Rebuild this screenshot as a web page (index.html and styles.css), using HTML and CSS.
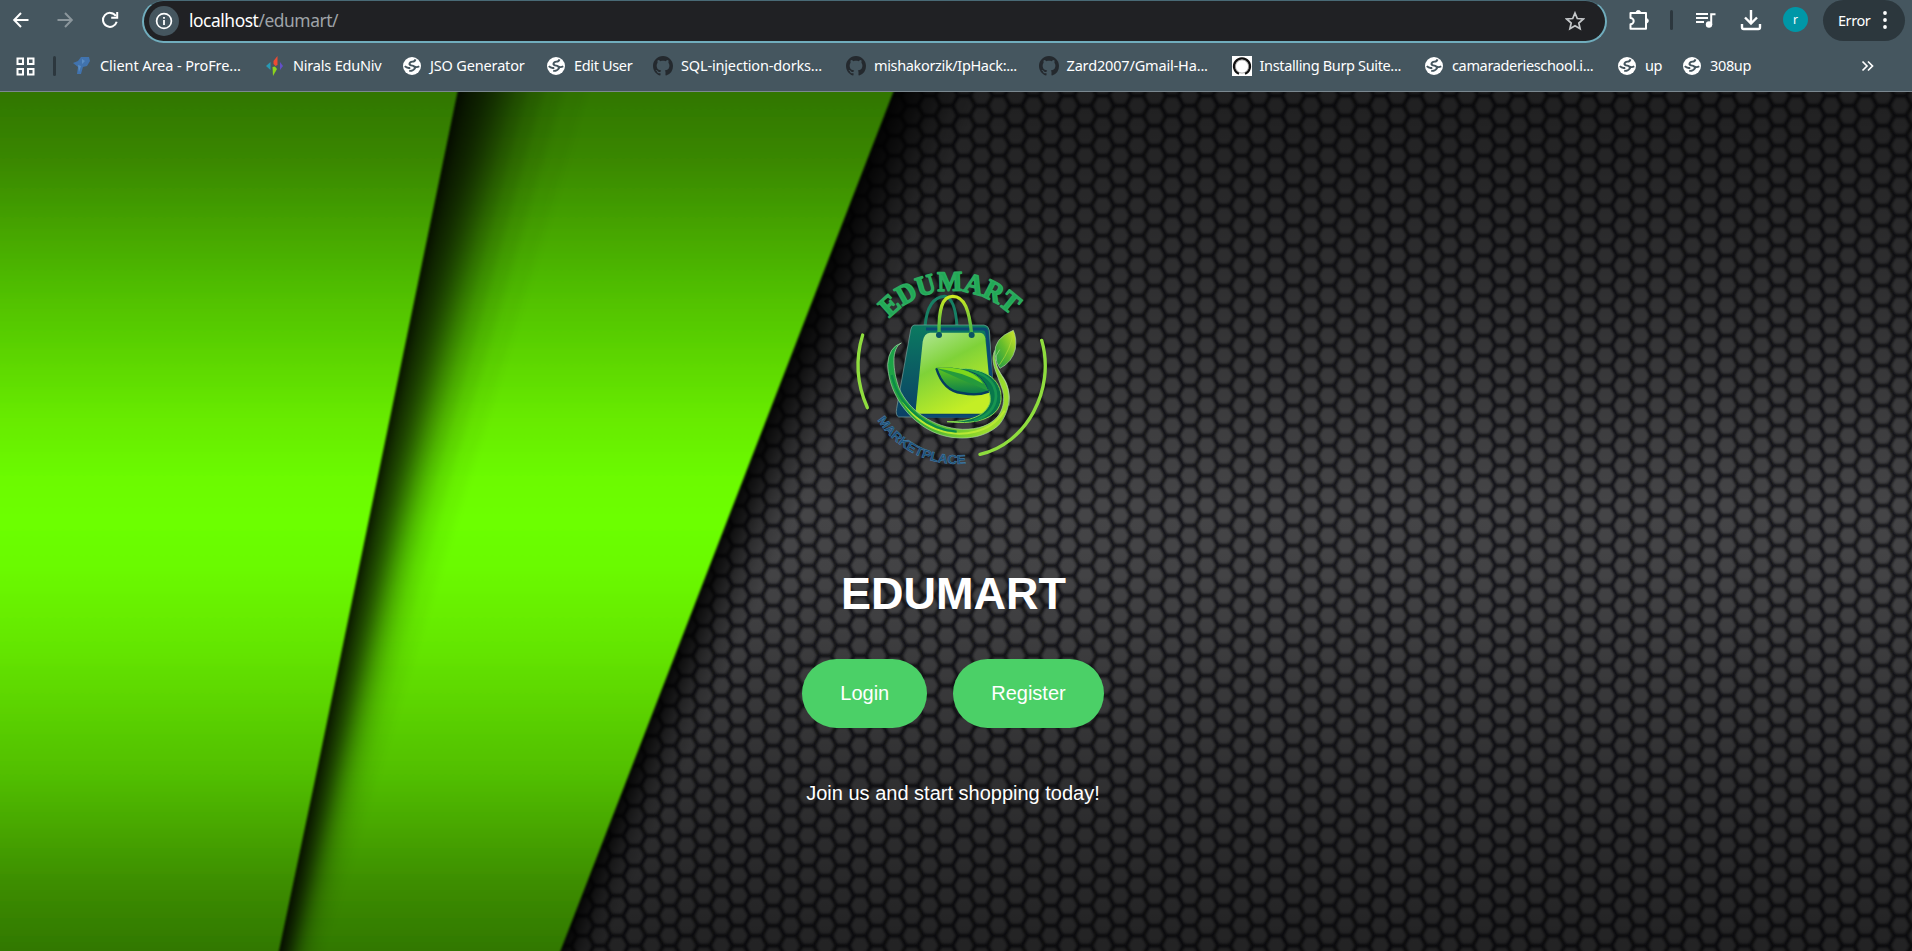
FILE: index.html
```html
<!DOCTYPE html>
<html lang="en">
<head>
<meta charset="utf-8">
<title>EduMart</title>
<link rel="stylesheet" href="styles.css">
</head>
<body>
<svg class="defs" width="0" height="0" aria-hidden="true">
  <symbol id="globe" viewBox="0 0 20 20">
    <circle cx="10" cy="10" r="9" fill="#fff"/>
    <path d="M13.500 3.400Q12.800 5.600 10.500 5.600Q7.600 5.800 7.400 8.200Q8 9.800 10.500 9.600Q13 10.200 13 12.200Q11 15.200 7.200 14.800M2.800 10.200Q5 12.600 8.300 11.800M12.500 10.600Q15 11.800 17.200 10.200" fill="none" stroke="#45565f" stroke-width="1.900"/>
  </symbol>
  <symbol id="github" viewBox="0 0 16 16">
    <path fill="#24292e" d="M8 0C3.580 0 0 3.580 0 8c0 3.540 2.290 6.530 5.470 7.590.4.070.55-.17.55-.38 0-.19-.01-.82-.01-1.490-2.010.37-2.530-.49-2.690-.94-.09-.23-.48-.94-.82-1.130-.28-.15-.68-.52-.01-.53.63-.01 1.080.58 1.230.82.72 1.210 1.870.87 2.330.66.07-.52.28-.87.51-1.070-1.780-.2-3.640-.89-3.640-3.950 0-.87.31-1.590.82-2.150-.08-.2-.36-1.020.08-2.120 0 0 .67-.21 2.200.82.64-.18 1.320-.27 2-.27s1.360.09 2 .27c1.530-1.040 2.200-.82 2.200-.82.44 1.100.16 1.920.08 2.120.51.56.82 1.270.82 2.150 0 3.070-1.870 3.750-3.650 3.950.29.25.54.73.54 1.480 0 1.070-.01 1.930-.01 2.200 0 .21.15.46.55.38A8.010 8.010 0 0 0 16 8c0-4.420-3.580-8-8-8z"/>
  </symbol>
</svg>

<header class="chrome">
  <div class="toolbar">
    <div class="nav back"><svg width="18" height="18" viewBox="0 0 18 18"><path d="M16.500 9H3M9 2L2.200 9L9 16" fill="none" stroke="#fff" stroke-width="2"/></svg></div>
    <div class="nav forward"><svg width="18" height="18" viewBox="0 0 18 18"><path d="M1.500 9H15M9 2L15.800 9L9 16" fill="none" stroke="#8b969c" stroke-width="2"/></svg></div>
    <div class="nav reload"><svg width="18" height="18" viewBox="0 0 18 18"><path d="M14.800 5A7 7 0 1 0 15.700 10.800" fill="none" stroke="#fff" stroke-width="2"/><path d="M16.200 1V6.800H10.200" fill="none" stroke="#fff" stroke-width="2"/></svg></div>
    <div class="address">
      <span class="info"><svg width="18" height="18" viewBox="0 0 18 18"><circle cx="9" cy="9" r="7.400" fill="none" stroke="#fff" stroke-width="1.700"/><path d="M9 8V13M9 5V6.800" stroke="#fff" stroke-width="1.800"/></svg></span>
      <span class="url">localhost<span class="path">/edumart/</span></span>
      <svg class="star" width="20" height="20" viewBox="0 0 20 20"><path d="M10 2L12.300 7.500L18.300 8L13.800 12L15.100 17.800L10 14.700L4.900 17.800L6.200 12L1.700 8L7.700 7.500Z" fill="none" stroke="#c5c8ca" stroke-width="1.700"/></svg>
    </div>
    <div class="nav puzzle"><svg width="22" height="22" viewBox="0 0 22 22"><path d="M2.500 4H18V19.800H2.500V15.300A3.200 3.200 0 0 0 2.500 8.900Z" fill="none" stroke="#fff" stroke-width="2" stroke-linejoin="round"/><path d="M8 3.800a2.300 2.300 0 0 1 4.600 0ZM18 9.500a2.300 2.300 0 0 1 0 4.600Z" fill="#fff" stroke="#fff"/></svg></div>
    <span class="divider"></span>
    <div class="nav music"><svg width="22" height="20" viewBox="0 0 22 20"><path d="M1 4H13M1 8H13M1 12H9M16.200 15V4.200H20.500" fill="none" stroke="#fff" stroke-width="2"/><circle cx="14" cy="14.500" r="3.200" fill="#fff"/></svg></div>
    <div class="nav download"><svg width="22" height="22" viewBox="0 0 22 22"><path d="M11 1V14M5 8.500L11 14.500L17 8.500M2 15V18.300Q2 20 3.700 20H18.300Q20 20 20 18.300V15" fill="none" stroke="#fff" stroke-width="2.400"/></svg></div>
    <span class="avatar">r</span>
    <div class="error-pill"><span>Error</span><svg width="6" height="18" viewBox="0 0 6 18"><g fill="#fff"><circle cx="3" cy="2" r="1.900"/><circle cx="3" cy="9" r="1.900"/><circle cx="3" cy="16" r="1.900"/></g></svg></div>
  </div>
  <nav class="bookmarks">
    <svg class="apps" width="19" height="19" viewBox="0 0 19 19"><g fill="none" stroke="#fff" stroke-width="2"><rect x="1.500" y="1.500" width="5.500" height="5.500"/><rect x="12" y="1.500" width="5.500" height="5.500"/><rect x="1.500" y="12" width="5.500" height="5.500"/><rect x="12" y="12" width="5.500" height="5.500"/></g></svg>
    <span class="divider"></span>
    <div class="bm w-client"><svg class="ico" viewBox="0 0 20 20"><path d="M1 7L6 5L9 1L17 1L18 5L15 10L11 11L9 18L5 18L6 11Z" fill="#4173ae"/><path d="M10 3L13 5L10 8ZM6 9L9 10L7 16Z" fill="#5b8dc4"/></svg><span>Client Area - ProFre...</span></div>
    <div class="bm w-nirals"><svg class="ico" viewBox="0 0 20 20"><path d="M8.500 5L12.500 0V9L10.500 10L8.500 8Z" fill="#ee4b32"/><path d="M7.500 11L10 10.500L12 13L8 20Z" fill="#8bd31d"/><path d="M5.500 6V14L1 10Z" fill="#2899b5"/><path d="M15 6V14L18 10Z" fill="#6350c9"/></svg><span>Nirals EduNiv</span></div>
    <div class="bm w-jso"><svg class="ico"><use href="#globe"/></svg><span>JSO Generator</span></div>
    <div class="bm w-edit"><svg class="ico"><use href="#globe"/></svg><span>Edit User</span></div>
    <div class="bm w-sql"><svg class="ico"><use href="#github"/></svg><span>SQL-injection-dorks...</span></div>
    <div class="bm w-misha"><svg class="ico"><use href="#github"/></svg><span>mishakorzik/IpHack:...</span></div>
    <div class="bm w-zard"><svg class="ico"><use href="#github"/></svg><span>Zard2007/Gmail-Ha...</span></div>
    <div class="bm w-burp"><svg class="ico" viewBox="0 0 20 20"><rect width="20" height="20" fill="#fff"/><path d="M7 17.800A8 8 0 1 1 13 17.800" fill="none" stroke="#111" stroke-width="2.200"/><circle cx="10" cy="10.500" r="6.600" fill="none" stroke="#777" stroke-width=".6"/></svg><span>Installing Burp Suite...</span></div>
    <div class="bm w-camara"><svg class="ico"><use href="#globe"/></svg><span>camaraderieschool.i...</span></div>
    <div class="bm w-up"><svg class="ico"><use href="#globe"/></svg><span>up</span></div>
    <div class="bm w-308"><svg class="ico"><use href="#globe"/></svg><span>308up</span></div>
    <svg class="more" width="13" height="12" viewBox="0 0 13 12"><path d="M1.500 1.500L6 6L1.500 10.500M7 1.500L11.500 6L7 10.500" fill="none" stroke="#fff" stroke-width="1.700"/></svg>
  </nav>
</header>

<main class="page">
  <svg class="backdrop" viewBox="0 92 1912 859" preserveAspectRatio="none" aria-hidden="true">
    <defs>
      <pattern id="hex" patternUnits="userSpaceOnUse" x="1206.700" y="425.700" width="34.680" height="20">
        <rect width="34.680" height="20" fill="#18181a"/>
        <g fill="#454547" stroke="#454547" stroke-width="3" stroke-linejoin="round">
          <path id="cell" d="M-7.200 0L-3.800 -6.300H3.800L7.200 0L3.800 6.300H-3.800Z"/>
          <use href="#cell" x="34.680"/><use href="#cell" y="20"/><use href="#cell" x="34.680" y="20"/>
          <use href="#cell" x="17.340" y="10"/>
        </g>
      </pattern>
      <linearGradient id="shade" x1="0" y1="0" x2="0" y2="1">
        <stop offset="0" stop-color="#000" stop-opacity=".54"/><stop offset=".22" stop-color="#000" stop-opacity=".32"/>
        <stop offset=".48" stop-color="#000" stop-opacity="0"/><stop offset=".56" stop-color="#000" stop-opacity=".03"/>
        <stop offset=".8" stop-color="#000" stop-opacity=".3"/><stop offset="1" stop-color="#000" stop-opacity=".5"/>
      </linearGradient>
      <linearGradient id="green" gradientUnits="userSpaceOnUse" x1="0" y1="92" x2="0" y2="951">
        <stop offset="0" stop-color="#307600"/><stop offset=".08" stop-color="#3a8800"/><stop offset=".23" stop-color="#50be00"/>
        <stop offset=".37" stop-color="#66e800"/><stop offset=".45" stop-color="#6cfb00"/><stop offset=".5" stop-color="#6cff00"/>
        <stop offset=".55" stop-color="#6bfb00"/><stop offset=".65" stop-color="#64e500"/><stop offset=".8" stop-color="#51bd00"/>
        <stop offset=".92" stop-color="#3d8e00"/><stop offset="1" stop-color="#317800"/>
      </linearGradient>
      <filter id="soft"><feGaussianBlur stdDeviation="1"/></filter>
      <filter id="edge"><feGaussianBlur stdDeviation=".9"/></filter>
      <filter id="fade" x="-20%" width="140%"><feGaussianBlur stdDeviation="4 1"/></filter>
      <clipPath id="second"><path d="M0 80H898L555 965H0Z"/></clipPath>
    </defs>
    <rect x="400" y="80" width="1530" height="890" fill="url(#hex)" filter="url(#soft)"/>
    <rect x="400" y="92" width="1512" height="859" fill="url(#shade)"/>
    <g filter="url(#fade)">
      <path d="M800 60H913L554 970H500Z" fill-opacity=".65"/>
      <path d="M800 60H925L558 970H500Z" fill-opacity=".4"/>
      <path d="M800 60H938L563 970H500Z" fill-opacity=".35"/>
      <path d="M800 60H953L569 970H500Z" fill-opacity=".26"/>
      <path d="M800 60H970L577 970H500Z" fill-opacity=".18"/>
      <path d="M800 60H990L588 970H500Z" fill-opacity=".12"/>
    </g>
    <path d="M-5 80H898L555 965H-5Z" fill="url(#green)" filter="url(#edge)"/>
    <g clip-path="url(#second)">
      <g filter="url(#fade)">
        <path d="M400 60H469L277 970H240Z" fill-opacity=".6"/>
        <path d="M400 60H478L279 970H240Z" fill-opacity=".27"/>
        <path d="M400 60H488L282 970H240Z" fill-opacity=".25"/>
        <path d="M400 60H498L285 970H240Z" fill-opacity=".24"/>
        <path d="M400 60H509L288 970H240Z" fill-opacity=".22"/>
        <path d="M400 60H521L291 970H240Z" fill-opacity=".2"/>
        <path d="M400 60H535L295 970H240Z" fill-opacity=".17"/>
        <path d="M400 60H552L300 970H240Z" fill-opacity=".12"/>
        <path d="M400 60H572L307 970H240Z" fill-opacity=".08"/>
        <path d="M400 60H597L316 970H240Z" fill-opacity=".04"/>
      </g>
    </g>
    <path d="M-5 80H460L315 780L276 965H-5Z" fill="url(#green)" filter="url(#edge)"/>
  </svg>

  <svg class="logo" width="220" height="220" viewBox="0 0 660 660" role="img" aria-label="EduMart Marketplace">
    <defs>
      <linearGradient id="front" x1="0" y1="0" x2=".5" y2="1"><stop offset="0" stop-color="#b4e89a"/><stop offset=".45" stop-color="#7fd238"/><stop offset="1" stop-color="#c4ee25"/></linearGradient>
      <linearGradient id="side" x1="0" y1="0" x2="0" y2="1"><stop offset="0" stop-color="#0b7a60"/><stop offset="1" stop-color="#0b3f66"/></linearGradient>
      <linearGradient id="swoosh" x1="0" y1="0" x2="1" y2=".3"><stop offset="0" stop-color="#17a14b"/><stop offset=".45" stop-color="#35ab35"/><stop offset="1" stop-color="#9bdc2c"/></linearGradient>
      <linearGradient id="leaf" x1="0" y1="0" x2="0" y2="1"><stop offset="0" stop-color="#5fc61e"/><stop offset="1" stop-color="#087a4c"/></linearGradient>
      <linearGradient id="leaf2" x1="1" y1="0" x2="0" y2="1"><stop offset="0" stop-color="#d6e92a"/><stop offset=".5" stop-color="#67bd2c"/><stop offset="1" stop-color="#15964a"/></linearGradient>
      <linearGradient id="handle" x1="0" y1="0" x2="0" y2="1"><stop offset="0" stop-color="#cdea20"/><stop offset="1" stop-color="#3fb34c"/></linearGradient>
      <path id="top-arc" d="M148 190A252 252 0 0 1 516 184"/>
      <path id="low-arc" d="M112 495A282 282 0 0 0 392 624"/>
    </defs>
    <g fill="none" stroke="#8fdd3e" stroke-width="10" stroke-linecap="round">
      <path d="M68 240Q34 350 82 458"/><path d="M605 256C648 404 558 568 420 598"/>
    </g>
    <g class="logo-top">
      <text class="halo"><textPath href="#top-arc" textLength="408" lengthAdjust="spacingAndGlyphs">EDUMART</textPath></text>
    </g>
    <text class="logo-low"><textPath href="#low-arc" textLength="312" lengthAdjust="spacingAndGlyphs">MARKETPLACE</textPath></text>
    <path d="M255 215C260 155 280 126 314 124Q346 130 351 215" fill="none" stroke="#178064" stroke-width="9"/>
    <path d="M222 210H432Q446 212 448 226L464 470L448 486H176Q166 482 170 460L212 225Q214 212 222 210Z" fill="url(#side)" stroke="#7ba39e" stroke-width="2"/>
    <path d="M258 222H430Q440 222 441 234L460 440L440 484H250" fill="none" stroke="#0b4a73" stroke-width="9"/>
    <path d="M270 233H420Q434 235 436 250L454 440Q452 464 428 476H226L248 260Q252 235 270 233Z" fill="url(#front)"/>
    <path d="M297 238C296 160 307 124 338 124C374 124 388 166 395 238" fill="none" stroke="url(#handle)" stroke-width="10"/>
    <g fill="#0a5263"><circle cx="297" cy="240" r="9"/><circle cx="395" cy="240" r="9"/></g>
    <path d="M184 264C153 280 158 345 177 399C206 466 278 518 367 523C466 524 502 468 488 406C470 352 445 310 468 282C459 304 466 334 489 366C515 404 514 462 480 506C432 558 334 562 266 524C190 482 144 400 143 328Q146 276 184 264Z" fill="url(#swoosh)" stroke="#a8d5a7" stroke-width="2"/>
    <path d="M190 440C240 520 330 550 405 530Q458 520 494 467" fill="none" stroke="#b9e834" stroke-width="6"/>
    <path d="M155 360C178 462 270 524 350 530" fill="none" stroke="#0d8a48" stroke-width="7"/>
    <path d="M350 342C426 334 488 370 483 434C478 482 424 512 321 500C386 500 438 484 450 442C456 401 426 366 350 342Z" fill="#08784b" stroke="#87d64b" stroke-width="3"/>
    <path d="M376 345C438 350 468 386 468 424Q465 476 402 497" fill="none" stroke="#189650" stroke-width="8"/>
    <path d="M289 340Q311 405 365 414Q414 424 446 408Q430 360 385 348Q340 336 289 340Z" fill="url(#leaf)" stroke="#073f62" stroke-width="3"/>
    <path d="M289 340Q310 408 365 414Q412 424 446 410" fill="none" stroke="#063c5e" stroke-width="7"/>
    <path d="M289 340Q365 376 446 408C425 360 380 330 289 340Z" fill="#259a3c"/>
    <path d="M289 340Q365 350 430 386Q390 330 289 340Z" fill="#7ed81c"/>
    <path d="M520 226Q460 250 465 298Q470 328 480 340Q516 322 526 282Q531 250 520 226Z" fill="url(#leaf2)" stroke="#a8d5a7" stroke-width="2"/>
    <path d="M520 230Q514 280 478 330" fill="none" stroke="#b5dc3a" stroke-width="2"/>
    <path d="M479 284Q452 316 484 361Q513 399 507 452" fill="none" stroke="#b9d9a0" stroke-width="2"/>
  </svg>

  <h1 class="title">EDUMART</h1>
  <div class="actions"><a class="btn">Login</a><a class="btn">Register</a></div>
  <p class="tagline">Join us and start shopping today!</p>
</main>
</body>
</html>
```

FILE: styles.css
```css
* { box-sizing: border-box; }
body { margin: 0; height: 951px; overflow: hidden; background: #1c1c1e; color: #fff; font-family: "Liberation Sans", Arial, sans-serif; }
.defs { position: absolute; }

.chrome { height: 92px; background: #45565f; border-bottom: 1px solid #7b8890; font-family: "Noto Sans", "Open Sans", sans-serif; }
.toolbar { display: flex; align-items: flex-start; height: 43px; }
.nav { display: flex; align-items: center; justify-content: center; height: 40px; flex: none; }
.back { width: 41px; }
.forward { width: 48px; }
.reload { width: 42px; }
.address { display: flex; align-items: center; width: 1465px; height: 43px; margin-left: 11px; padding: 0 20px 1px 5px; background: #202124; border: 2px solid #70adbd; border-top: 1px solid #496a76; border-radius: 22px; flex: none; }
.info { display: flex; align-items: center; justify-content: center; width: 30px; height: 30px; border-radius: 50%; background: #45565f; }
.url { margin: 0 0 1px 10px; font-size: 17.400px; line-height: 24px; letter-spacing: -.45px; }
.path { color: #9fa4a8; }
.star { margin-left: auto; }
.puzzle { width: 63px; }
.divider { width: 3px; height: 20px; border-radius: 2px; background: #2c373e; flex: none; }
.toolbar .divider { margin-top: 10px; }
.music { width: 66px; }
.download { width: 23px; }
.avatar { display: flex; align-items: center; justify-content: center; width: 25px; height: 25px; margin: 7px 15px 0 21px; border-radius: 50%; background: #0097a7; font-size: 12px; line-height: 20px; }
.error-pill { display: flex; align-items: center; justify-content: space-between; width: 82px; height: 41px; padding: 0 17px 2px 15px; border-radius: 21px; background: #2c373d; font-size: 14.500px; letter-spacing: -.45px; }

.bookmarks { display: flex; align-items: center; height: 46px; padding: 0 38px 0 16px; font-size: 14.500px; letter-spacing: -.35px; line-height: 20px; }
.apps { margin-right: 18px; flex: none; }
.bookmarks .divider { margin-right: 16px; }
.bm { display: flex; align-items: center; gap: 8px; white-space: nowrap; flex: none; }
.bm span { padding-bottom: 2px; }
.ico { width: 20px; height: 20px; flex: none; }
.w-client, .w-sql, .w-zard, .w-camara { width: 193px; }
.w-misha, .w-burp { width: 192.500px; }
.w-client { letter-spacing: -.08px; }
.w-sql, .w-zard, .w-jso { letter-spacing: -.16px; }
.w-nirals { width: 137px; letter-spacing: -.2px; }
.w-jso { width: 144px; }
.w-edit { width: 107px; }
.w-up { width: 65px; }
.more { margin-left: auto; }

.page { position: relative; display: flex; flex-direction: column; align-items: center; height: 859px; padding: 163px 6px 0 0; overflow: hidden; }
.backdrop { position: absolute; inset: 0; width: 1912px; height: 859px; }
.logo { position: relative; margin-right: 6px; flex: none; }
.logo-top { fill: #20a955; stroke: #2bab5e; stroke-width: 5; stroke-linejoin: round; font: bold 84px "Liberation Serif", serif; }
.logo-low { fill: #174c75; stroke: #4a7fa6; stroke-width: 1.5; font: bold 38px "Liberation Sans", sans-serif; }
.title { position: relative; margin: 93px 0 0 1px; font-size: 45px; line-height: 52px; }
.actions { position: relative; display: flex; gap: 26px; margin-top: 39px; }
.btn { height: 69px; padding: 0 38px; border-radius: 35px; background: #4bd067; font-size: 20px; line-height: 69px; }
.tagline { position: relative; margin: 53px 0 0; font-size: 20px; line-height: 24px; }
```
